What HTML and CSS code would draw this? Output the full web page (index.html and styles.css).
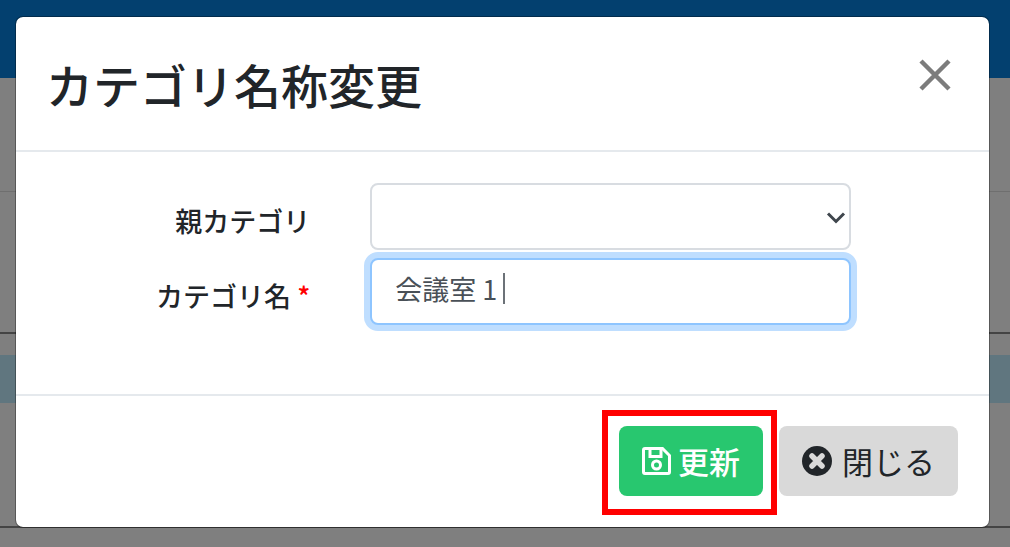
FILE: index.html
```html
<!DOCTYPE html>
<html lang="ja">
<head>
  <meta charset="UTF-8">
  <meta name="viewport" content="width=device-width, initial-scale=1.0">
  <title>カテゴリ名称変更</title>
  <link rel="stylesheet" href="styles.css">
</head>
<body>
  <!-- Page behind the dialog -->
  <div class="page">
    <div class="topbar"></div>
    <div class="toolbar"></div>
    <div class="filters"></div>
    <div class="list">
      <div class="selected-row"></div>
    </div>
  </div>

  <div class="backdrop">
    <form class="modal" role="dialog" aria-labelledby="modal-title">
      <div class="modal-header">
        <h1 id="modal-title">カテゴリ名称変更</h1>
        <button type="button" class="close" aria-label="閉じる">
          <svg width="32" height="32" viewBox="0 0 32 32">
            <path d="M2 2L30 30M30 2L2 30" stroke="#7c7c7c" stroke-width="4.5" fill="none" />
          </svg>
        </button>
      </div>

      <div class="modal-body">
        <label for="parent">親カテゴリ</label>
        <div class="field">
          <select id="parent" class="control">
            <option></option>
          </select>
          <svg class="chevron" width="20" height="14" viewBox="0 0 20 14">
            <path d="M2 2.5L10 10.5L18 2.5" stroke="#3f464d" stroke-width="3" fill="none" />
          </svg>
        </div>

        <label for="name">カテゴリ名 <span class="required">*</span></label>
        <div class="field">
          <input id="name" class="control" type="text" value="会議室 1" autocomplete="off" autofocus>
          <span class="caret"></span>
        </div>
      </div>

      <div class="modal-footer">
        <div class="highlight">
          <button type="submit" class="btn btn-success">
            <svg width="30" height="30" viewBox="0 0 30 30" fill="none" stroke="#fff" stroke-width="3">
              <path d="M3 2.5H20.5L27.5 9.5V26Q27.5 27.5 26 27.5H3Q1.5 27.5 1.5 26V4Q1.5 2.5 3 2.5Z" />
              <path d="M8 3V10.5H19V3" />
              <circle cx="14.5" cy="19" r="4" />
            </svg>
            更新
          </button>
        </div>
        <button type="button" class="btn btn-default">
          <svg width="30" height="30" viewBox="0 0 30 30">
            <circle cx="15" cy="15" r="15" fill="#212529" />
            <path d="M10 10L20 20M20 10L10 20" stroke="#d9d9d9" stroke-width="5.5" stroke-linecap="round" />
          </svg>
          閉じる
        </button>
      </div>
    </form>
  </div>
</body>
</html>
```

FILE: styles.css
```css
* {
  margin: 0;
  padding: 0;
  box-sizing: border-box;
}

body {
  font-family: "Noto Sans CJK JP", "Noto Sans", sans-serif;
  color: #212529;
  background-color: #fff;
  min-height: 100vh;
  overflow: hidden;
}

.topbar {
  height: 78px;
  background-color: #0681de;
}

.toolbar {
  height: 114px;
  border-bottom: 1px solid #dedede;
}

.filters {
  height: 142px;
  border-bottom: 2px solid #888;
}

.list {
  height: 194px;
  padding-top: 21px;
  border-bottom: 2px solid #888;
}

.selected-row {
  height: 48px;
  background-color: #c0ecff;
}

.backdrop {
  position: absolute;
  inset: 0;
  padding: 16px 20px 16px 15px;
  background-color: rgba(0, 0, 0, 0.5);
}

.modal {
  background-color: #fff;
  background-clip: padding-box;
  border: 1px solid rgba(0, 0, 0, 0.3);
  border-radius: 8px;
}

.modal-header {
  display: flex;
  justify-content: space-between;
  align-items: flex-start;
  padding: 32px 32px 31px 30px;
  border-bottom: 2px solid #e5e9ed;
}

h1 {
  font-size: 47px;
  font-weight: 500;
  line-height: 70px;
}

.close {
  display: flex;
  margin: 10px 6px;
  border: none;
  background: none;
}

.modal-body {
  display: grid;
  grid-template-columns: 6fr 11fr;
  gap: 8px 60px;
  padding: 31px 138px 69px 32px;
}

label {
  padding-top: 18px;
  font-size: 27px;
  font-weight: 500;
  line-height: 40px;
  text-align: right;
}

.required {
  color: #f00;
}

.field {
  position: relative;
}

.control {
  display: block;
  width: 100%;
  height: 67px;
  padding: 0 23px 6px;
  border: 2px solid #d8dce1;
  border-radius: 8px;
  background-color: #fff;
  color: #495057;
  font-family: inherit;
  font-size: 27px;
  font-weight: 400;
  appearance: none;
  outline: none;
}

.control:focus {
  border-color: #8ec5ff;
  box-shadow: 0 0 0 6px #bfdeff;
  caret-color: transparent;
}

.chevron {
  position: absolute;
  top: 28px;
  right: 5px;
}

.caret {
  position: absolute;
  top: 15px;
  left: 133px;
  width: 2px;
  height: 31px;
  background-color: #6c7278;
}

.modal-footer {
  display: flex;
  justify-content: flex-end;
  gap: 16px;
  padding: 30px 31px 31px;
  border-top: 2px solid #e5e9ed;
}

.btn {
  display: flex;
  align-items: center;
  gap: 6px;
  height: 70px;
  padding: 0 23px;
  border: none;
  border-radius: 8px;
  font-family: inherit;
  font-size: 31px;
  line-height: 46px;
}

.btn-success {
  background-color: #28c76f;
  color: #fff;
  font-weight: 500;
}

.btn-default {
  gap: 10px;
  background-color: #d9d9d9;
  color: #212529;
}

/* Red frame around the update button */
.highlight {
  position: relative;
}

.highlight::after {
  content: "";
  position: absolute;
  inset: -16px -14px -19px -17px;
  border: 6px solid #f00;
  pointer-events: none;
}
```
